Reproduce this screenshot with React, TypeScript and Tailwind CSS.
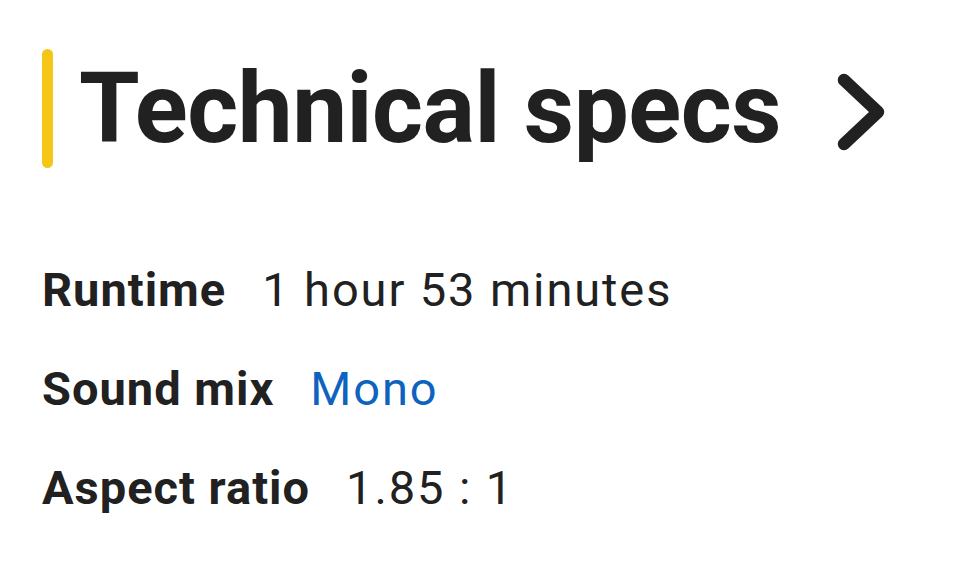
import React from 'react';

const specs = [
  { label: 'Runtime', value: '1 hour 53 minutes' },
  { label: 'Sound mix', value: 'Mono', link: true },
  { label: 'Aspect ratio', value: '1.85 : 1' },
];

export default function App() {
  return (
    <div className="min-h-screen bg-white text-[#212121] font-['Roboto',sans-serif] pl-[42px] pt-[49px]">
      <div className="flex items-center">
        <div className="w-[11px] h-[119px] bg-[#f5c518] rounded-full" />
        <h2 className="ml-[26px] text-[98px] font-bold leading-none tracking-[-0.5px]">Technical specs</h2>
        <svg className="ml-[53px] mt-[6px]" width="60" height="84" viewBox="0 0 60 84">
          <polyline points="10,10 44,42 10,74" fill="none" stroke="#212121" strokeWidth="12.5" strokeLinecap="round" strokeLinejoin="round" />
        </svg>
      </div>
      <div className="mt-[98px] flex flex-col gap-[52px]">
        {specs.map((s) => (
          <div key={s.label} className="flex items-baseline text-[47px] leading-[47px]">
            <span className="font-bold tracking-[1px]">{s.label}</span>
            <span className={`ml-[36px] tracking-[1.9px] ${s.link ? 'text-[#0e63be]' : ''}`}>{s.value}</span>
          </div>
        ))}
      </div>
    </div>
  );
}
